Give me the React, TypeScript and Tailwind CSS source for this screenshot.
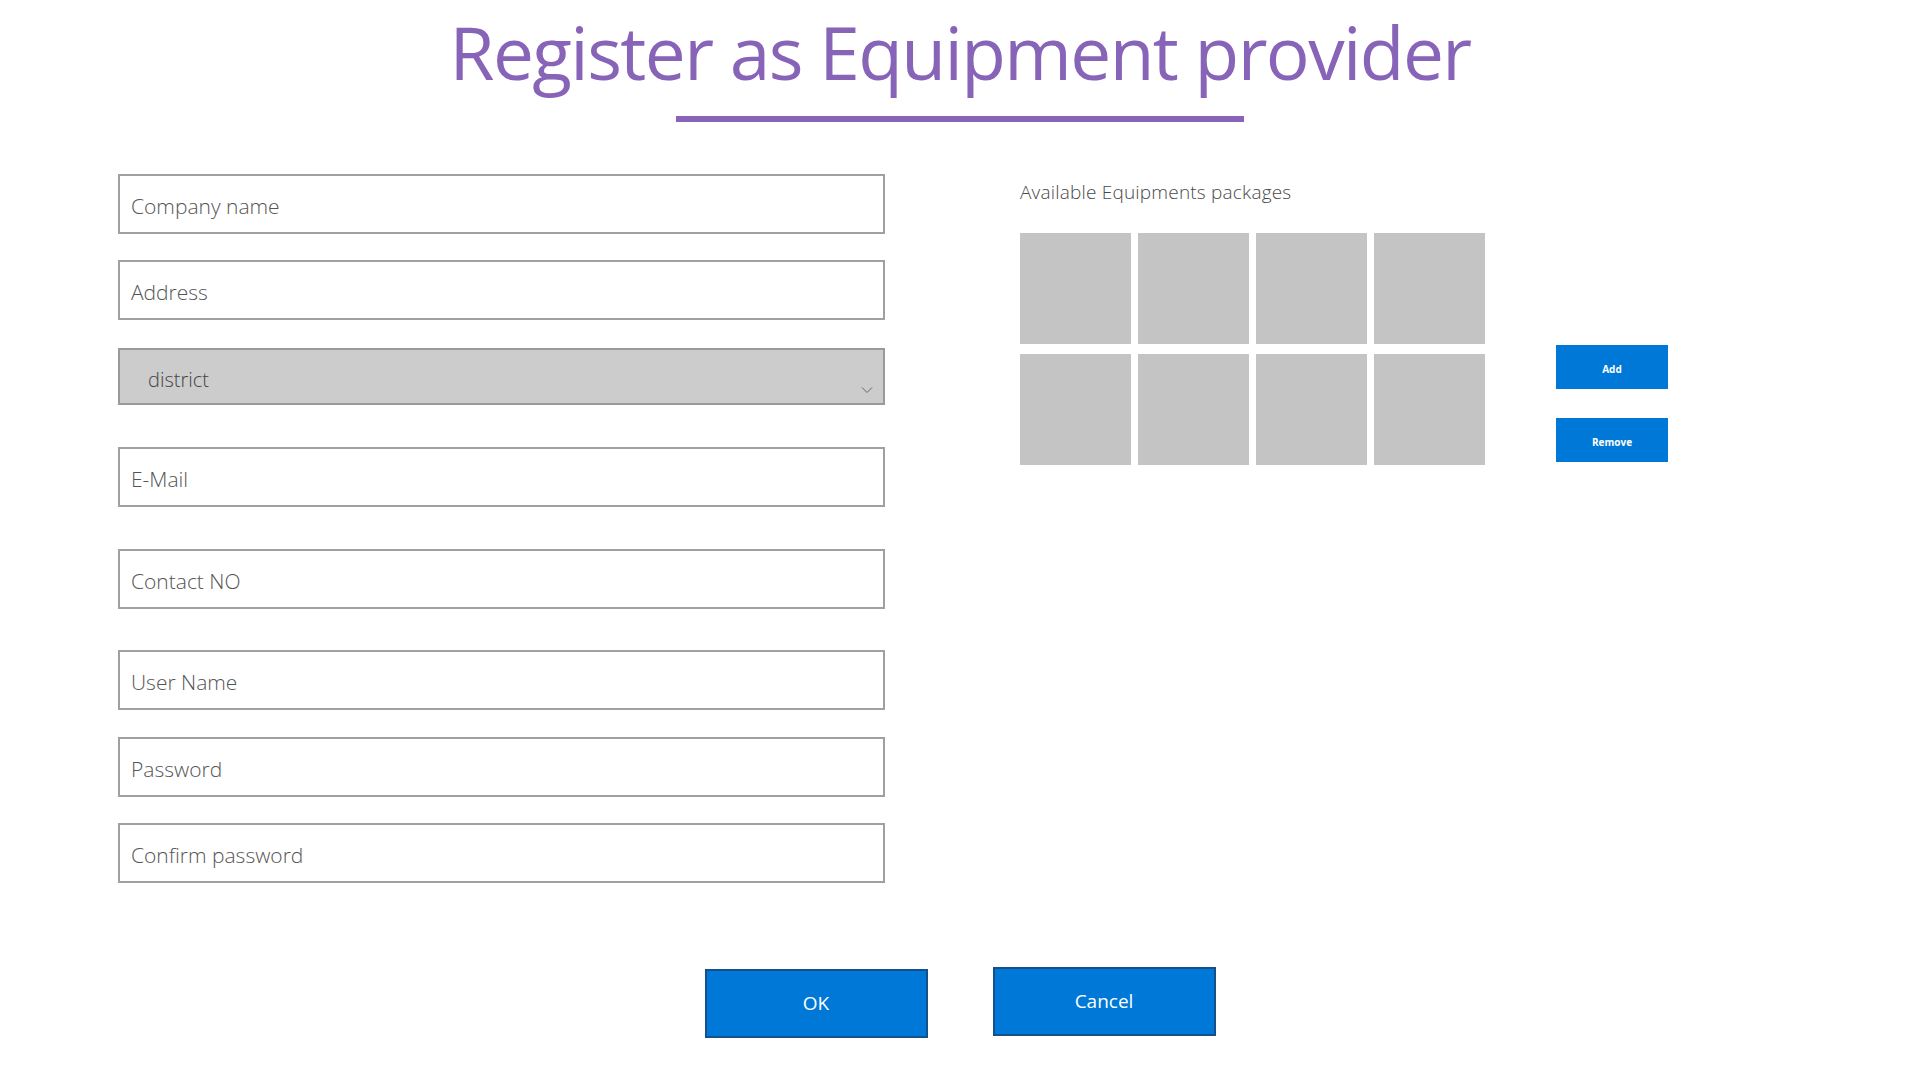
const fields = [
  { label: "Company name", mt: "mt-0" },
  { label: "Address", mt: "mt-[26px]" },
];

const lowerFields = [
  { label: "E-Mail", mt: "mt-[42px]" },
  { label: "Contact NO", mt: "mt-[42px]" },
  { label: "User Name", mt: "mt-[41px]" },
  { label: "Password", mt: "mt-[27px]" },
  { label: "Confirm password", mt: "mt-[26px]" },
];

const tiles = Array.from({ length: 8 }, (_, i) => i);

const Field = ({ label, mt }: { label: string; mt: string }) => (
  <input
    type="text"
    placeholder={label}
    className={`${mt} block w-[767px] h-[60px] border-2 border-[#a0a0a0] bg-white pl-[11px] pt-[4px] text-[21px] font-light text-[#444] placeholder:text-[#555] outline-none`}
  />
);

export default function App() {
  return (
    <div className="w-[1920px] min-h-[1080px] bg-white font-['Open_Sans','Noto_Sans',sans-serif] flex flex-col">
      {/* Heading */}
      <header className="flex flex-col items-center pt-[15px]">
        <h1 className="text-[#8764b8] text-[73px] font-medium leading-none tracking-[-0.022em]">
          Register as Equipment provider
        </h1>
        <div className="mt-[28px] w-[568px] h-[6px] bg-[#8764b8]" />
      </header>

      <main className="flex items-start mt-[52px]">
        {/* Form fields */}
        <div className="pl-[118px] flex flex-col">
          {fields.map((f) => (
            <Field key={f.label} label={f.label} mt={f.mt} />
          ))}
          <div className="mt-[28px] w-[767px] h-[57px] border-2 border-[#9a9a9a] bg-[#cccccc] flex items-center justify-between pl-[28px] pr-[10px]">
            <span className="pt-[7px] text-[20px] font-light text-[#444]">district</span>
            <svg width="12" height="8" viewBox="0 0 12 8" className="mt-[26px]">
              <path d="M1 1.5 L6 6.5 L11 1.5" fill="none" stroke="#666" strokeWidth="1" />
            </svg>
          </div>
          {lowerFields.map((f) => (
            <Field key={f.label} label={f.label} mt={f.mt} />
          ))}
        </div>

        {/* Equipment packages */}
        <section className="ml-[135px] mt-[6px] flex flex-col">
          <div className="text-[19px] font-light leading-[24px] text-[#4a4a4a] tracking-[0.01em]">
            Available Equipments packages
          </div>
          <div className="mt-[29px] flex items-start">
            <div className="grid grid-cols-4 gap-x-[7px] gap-y-[10px]">
              {tiles.map((t) => (
                <div key={t} className="w-[111px] h-[111px] bg-[#c4c4c4]" />
              ))}
            </div>
            <div className="ml-[71px] mt-[112px] flex flex-col gap-[29px]">
              <button className="w-[112px] h-[44px] pt-[5px] bg-[#0078d7] text-white text-[10px] font-bold">
                Add
              </button>
              <button className="w-[112px] h-[44px] pt-[5px] bg-[#0078d7] text-white text-[10px] font-bold">
                Remove
              </button>
            </div>
          </div>
        </section>
      </main>

      {/* Actions */}
      <footer className="mt-[84px] flex justify-center items-start gap-[65px]">
        <button className="mt-[2px] w-[223px] h-[69px] bg-[#0078d7] border-2 border-[#14508c] text-white text-[19px]">
          OK
        </button>
        <button className="w-[223px] h-[69px] bg-[#0078d7] border-2 border-[#14508c] text-white text-[19px]">
          Cancel
        </button>
      </footer>
    </div>
  );
}
